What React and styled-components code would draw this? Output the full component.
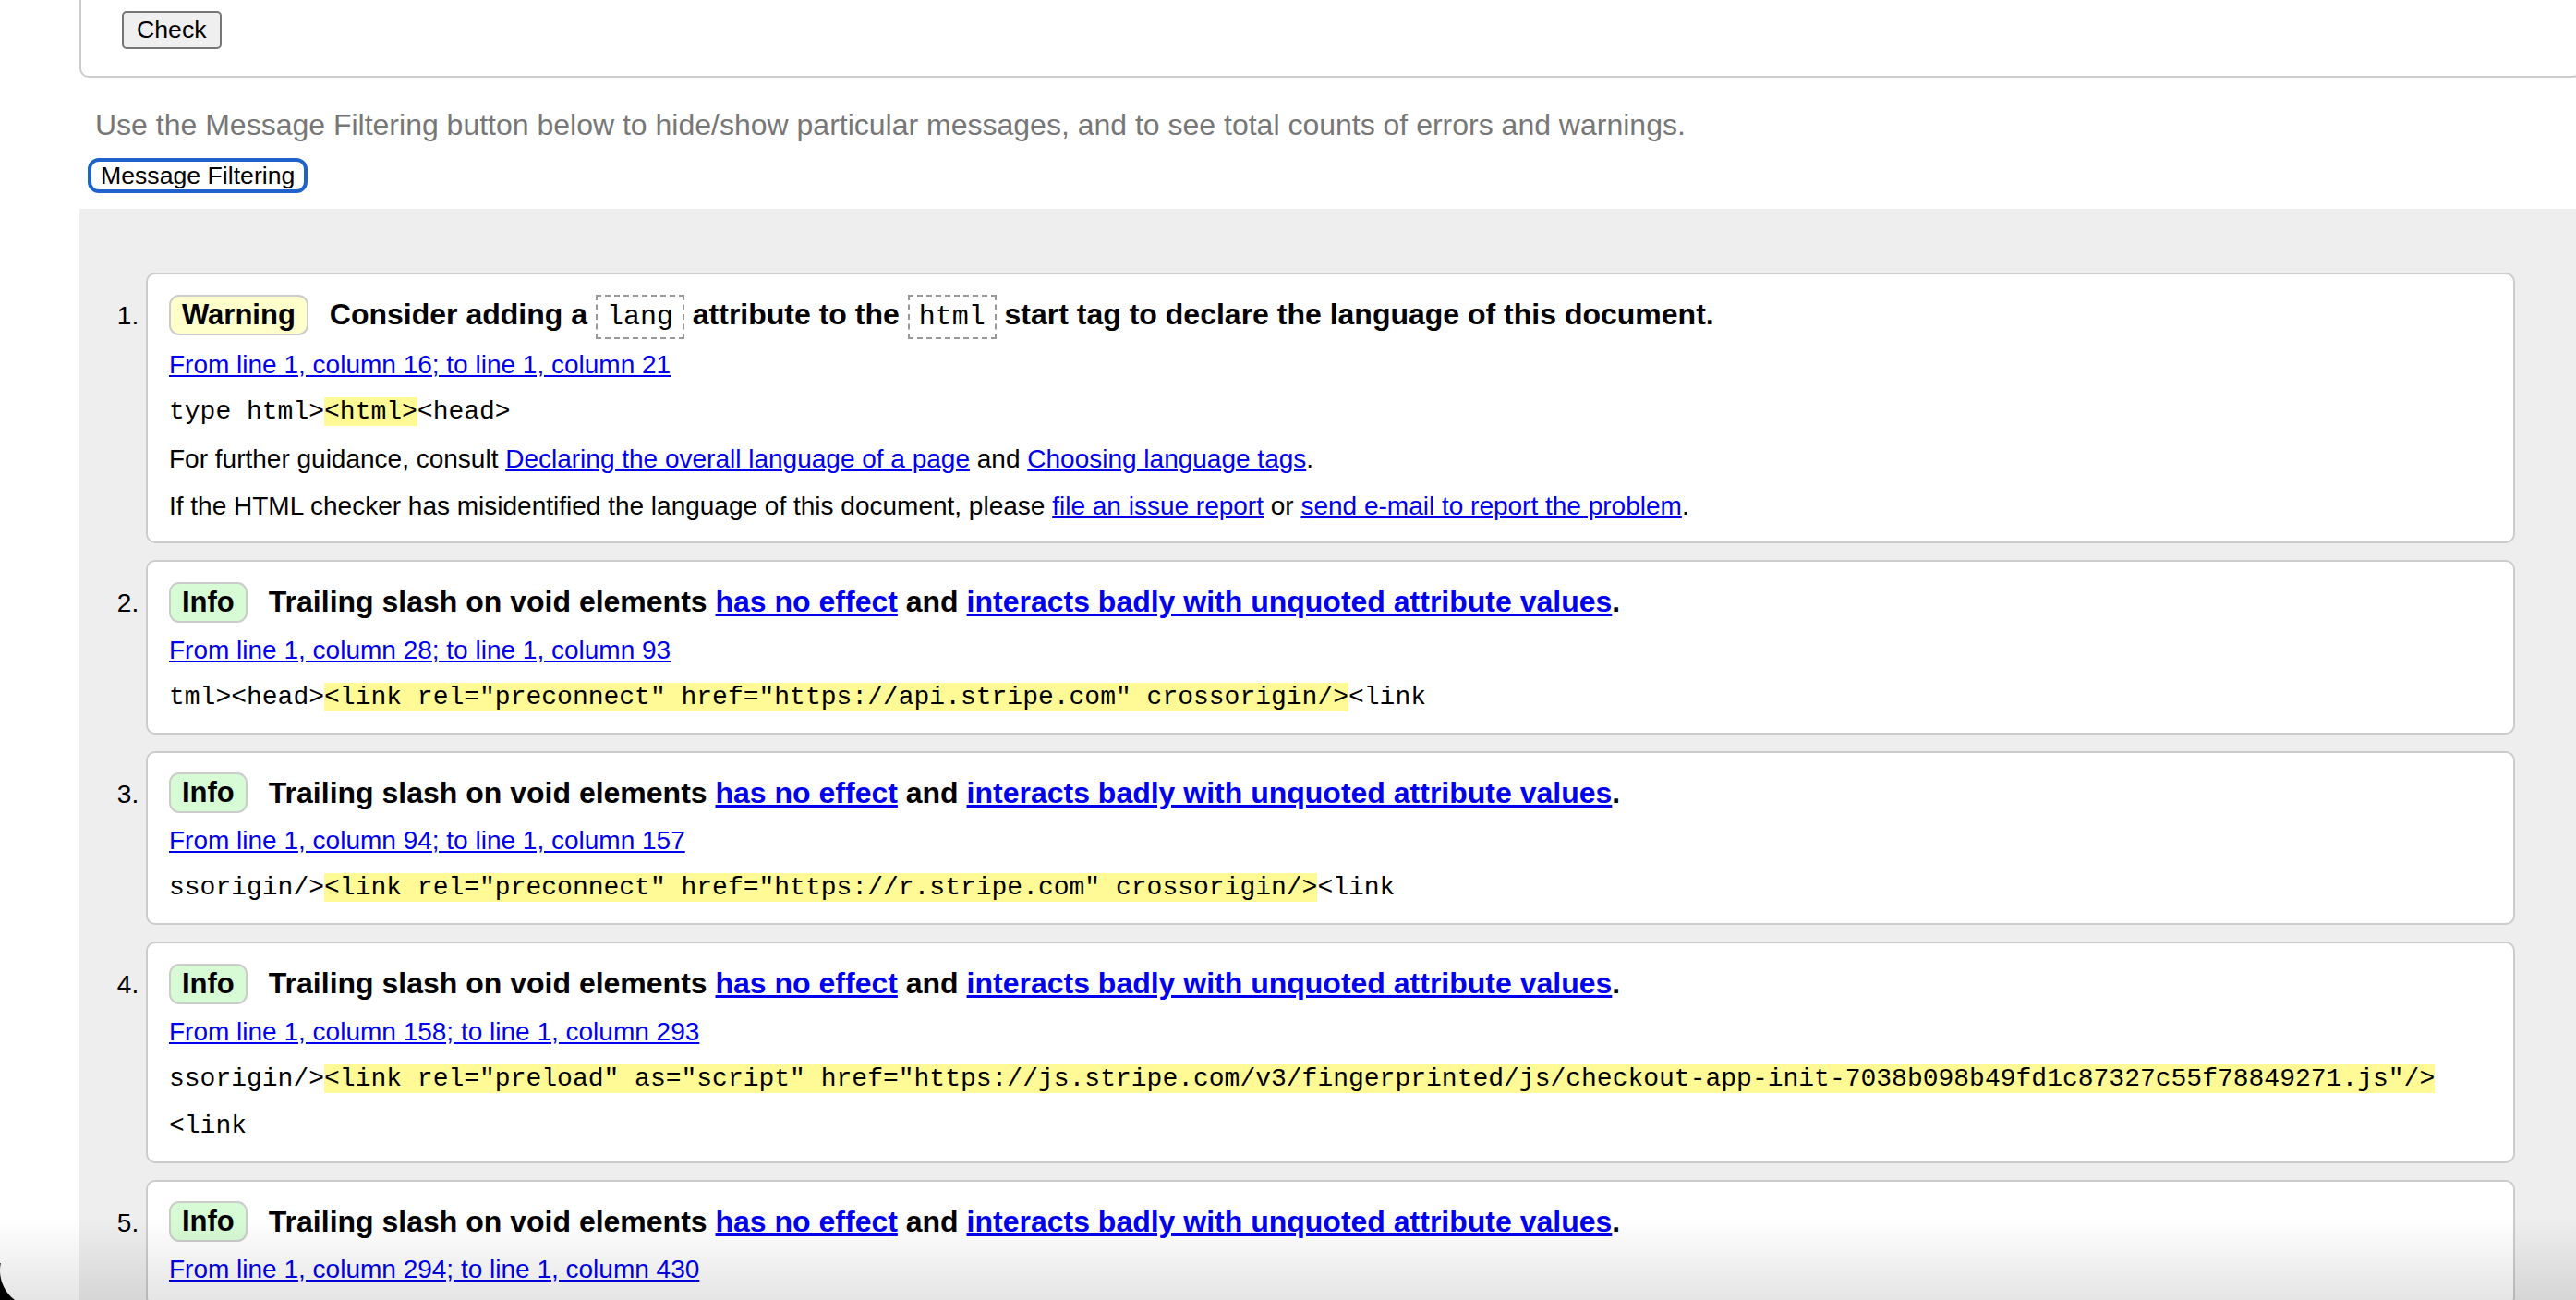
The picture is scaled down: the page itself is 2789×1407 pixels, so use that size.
import styled, { createGlobalStyle } from 'styled-components'

const GlobalStyle = createGlobalStyle`
  html, body {
    margin: 0;
    padding: 0;
    background: #fff;
  }
  body {
    font-family: "Liberation Sans", Arial, sans-serif;
    color: #000;
    overflow: hidden;
  }
`

const Page = styled.div`
  position: relative;
  height: 1407px;
  overflow: hidden;
  background: #fff;
`

const Fieldset = styled.div`
  margin: -30px -6px 0 86px;
  padding: 40px 0 29px 44px;
  border: 2px solid #ccc;
  border-radius: 10px;
`

const CheckButton = styled.button`
  display: block;
  height: 41px;
  padding: 0 14px;
  font: 26.67px "Liberation Sans", Arial, sans-serif;
  color: #000;
  background: #efefef;
  border: 2px solid #767676;
  border-radius: 5px;
`

const Hint = styled.p`
  margin: 33px 0 0 103px;
  font-size: 32px;
  color: #777;
`

const FilterButton = styled.button`
  display: block;
  margin: 17px 0 0 95px;
  height: 38px;
  padding: 0 10px;
  font: 26.67px "Liberation Sans", Arial, sans-serif;
  color: #000;
  background: #fff;
  border: 4px solid #1f62cc;
  border-radius: 12px;
`

const MessageList = styled.ol`
  margin: 17px 0 0 86px;
  padding: 69px 66px 0 72px;
  background: #eee;
  font-size: 28px;
  list-style: decimal outside;
  min-height: 1200px;
`

const Card = styled.li`
  background: #fff;
  border: 2px solid #ccc;
  border-radius: 10px;
  padding: 17px 23px 13px;
  margin-bottom: 18px;
`

const Heading = styled.p`
  margin: 0;
  font-size: 32px;
  font-weight: bold;
  line-height: 52px;
`

const Badge = styled.span`
  display: inline-block;
  vertical-align: middle;
  margin: 0 23px 4px 0;
  padding: 2px 12px;
  font-size: 31px;
  line-height: 36px;
  border: 2px solid #ccc;
  border-radius: 11px;
  background: ${p => (p.$kind === 'warning' ? '#ffffcc' : '#d7fbd5')};
`

const Code = styled.code`
  padding: 5px 10px;
  font-family: "Liberation Mono", "Courier New", monospace;
  font-size: 30px;
  font-weight: normal;
  border: 2px dashed #999;
`

const Line = styled.p`
  margin: 0;
  line-height: 51px;
`

const Extract = styled.p`
  margin: 0;
  line-height: 51px;
  font-family: "Liberation Mono", "Courier New", monospace;
  font-size: 28px;
`

const Highlight = styled.mark`
  background: #fff996;
  color: #000;
`

const Link = styled.a`
  color: #00e;
  text-decoration: underline;
`

const BottomShade = styled.div`
  position: absolute;
  left: 0;
  right: 0;
  bottom: 0;
  height: 90px;
  pointer-events: none;
  background: linear-gradient(rgba(0, 0, 0, 0), rgba(0, 0, 0, 0.1));
`

const WindowCorner = styled.div`
  position: absolute;
  left: 0;
  bottom: 0;
  width: 40px;
  height: 40px;
  pointer-events: none;
  background: radial-gradient(circle at 40px 8px, transparent 39.5px, #000 40.5px);
`

const trailing = (
  <>
    Trailing slash on void elements <Link href="#">has no effect</Link> and{' '}
    <Link href="#">interacts badly with unquoted attribute values</Link>.
  </>
)

const messages = [
  {
    kind: 'warning',
    label: 'Warning',
    title: (
      <>
        Consider adding a <Code>lang</Code> attribute to the <Code>html</Code> start tag to
        declare the language of this document.
      </>
    ),
    location: 'From line 1, column 16; to line 1, column 21',
    extract: ['type html>', '<html>', '<head>'],
    notes: [
      <>
        For further guidance, consult{' '}
        <Link href="#">Declaring the overall language of a page</Link> and{' '}
        <Link href="#">Choosing language tags</Link>.
      </>,
      <>
        If the HTML checker has misidentified the language of this document, please{' '}
        <Link href="#">file an issue report</Link> or{' '}
        <Link href="#">send e-mail to report the problem</Link>.
      </>,
    ],
  },
  {
    kind: 'info',
    label: 'Info',
    title: trailing,
    location: 'From line 1, column 28; to line 1, column 93',
    extract: ['tml><head>', '<link rel="preconnect" href="https://api.stripe.com" crossorigin/>', '<link'],
  },
  {
    kind: 'info',
    label: 'Info',
    title: trailing,
    location: 'From line 1, column 94; to line 1, column 157',
    extract: ['ssorigin/>', '<link rel="preconnect" href="https://r.stripe.com" crossorigin/>', '<link'],
  },
  {
    kind: 'info',
    label: 'Info',
    title: trailing,
    location: 'From line 1, column 158; to line 1, column 293',
    extract: [
      'ssorigin/>',
      '<link rel="preload" as="script" href="https://js.stripe.com/v3/fingerprinted/js/checkout-app-init-7038b098b49fd1c87327c55f78849271.js"/>',
      '<link',
    ],
  },
  {
    kind: 'info',
    label: 'Info',
    title: trailing,
    location: 'From line 1, column 294; to line 1, column 430',
  },
]

export default function App() {
  return (
    <>
      <GlobalStyle />
      <Page>
        <Fieldset>
          <CheckButton>Check</CheckButton>
        </Fieldset>
        <Hint>
          Use the Message Filtering button below to hide/show particular messages, and to see total
          counts of errors and warnings.
        </Hint>
        <FilterButton>Message Filtering</FilterButton>

        <MessageList>
          {messages.map((m, i) => (
            <Card key={i}>
              <Heading>
                <Badge $kind={m.kind}>{m.label}</Badge>
                {m.title}
              </Heading>
              <Line>
                <Link href="#">{m.location}</Link>
              </Line>
              {m.extract && (
                <Extract>
                  {m.extract[0]}
                  <Highlight>{m.extract[1]}</Highlight>
                  <wbr />
                  {m.extract[2]}
                </Extract>
              )}
              {m.notes && m.notes.map((n, j) => <Line key={j}>{n}</Line>)}
            </Card>
          ))}
        </MessageList>

        <BottomShade />
        <WindowCorner />
      </Page>
    </>
  )
}
